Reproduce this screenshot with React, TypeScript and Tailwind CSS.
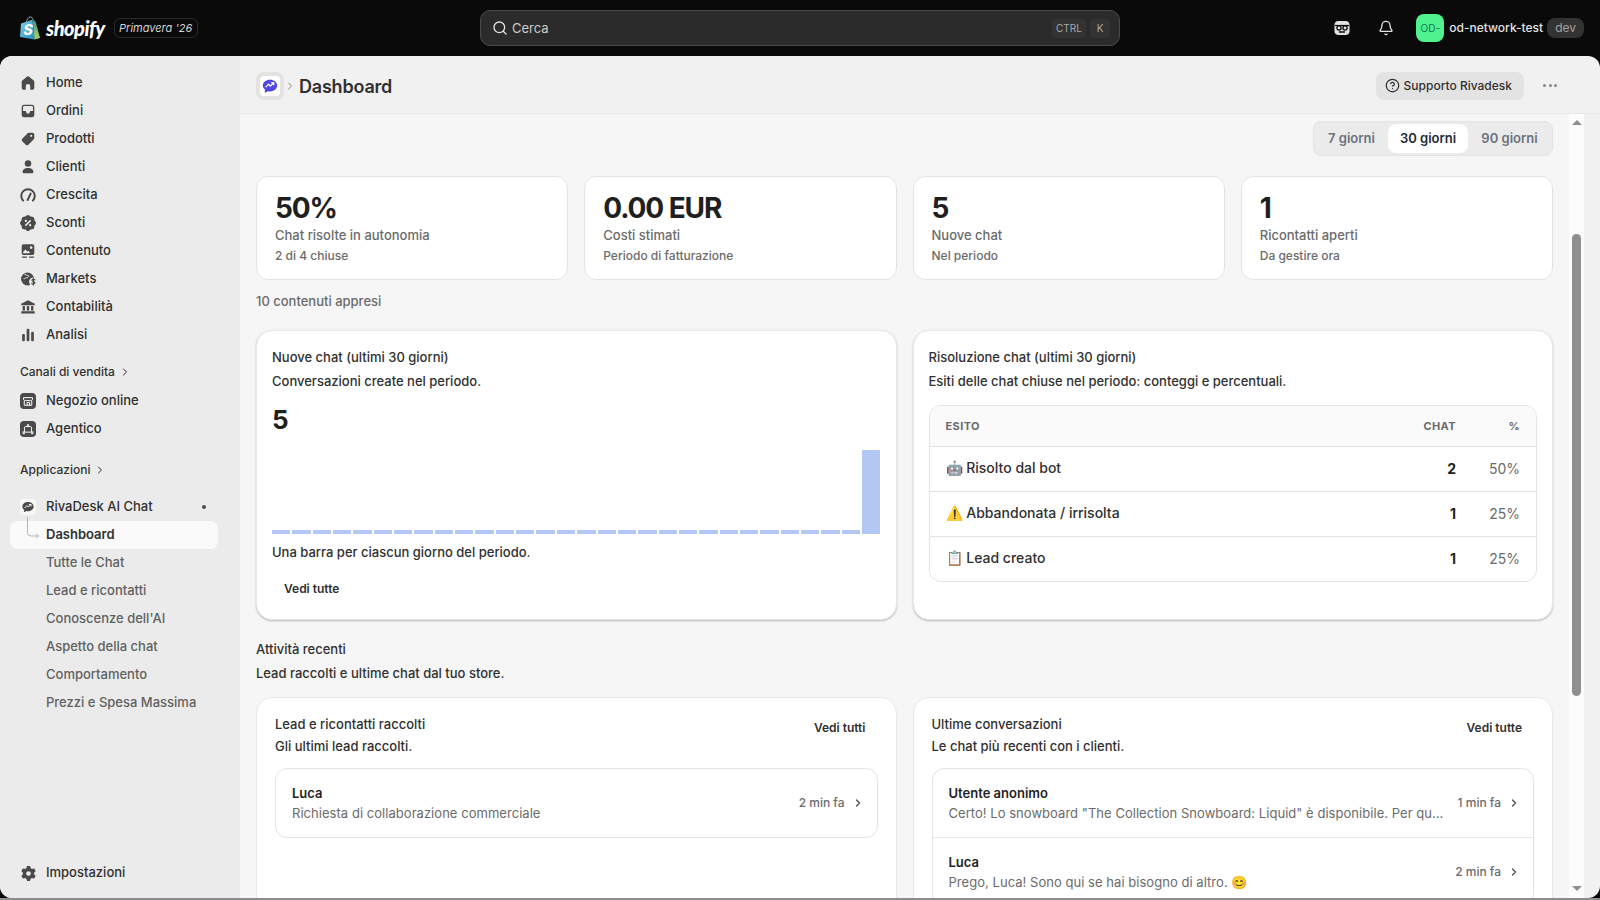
import type { ReactNode } from "react"
import { Bell, ChevronRight, CircleHelp, Search } from "lucide-react"
import { FaGear } from "react-icons/fa6"
import { RiDiscountPercentFill } from "react-icons/ri"

function Icon({ children }: { children: ReactNode }) {
  return (
    <svg viewBox="0 0 20 20" className="w-[18px] h-[18px] shrink-0 text-[#4a4a4a]" fill="currentColor">
      {children}
    </svg>
  )
}

const navItems: { label: string; icon: ReactNode }[] = [
  {
    label: "Home",
    icon: (
      <Icon>
        <path d="M10 2.500a2 2 0 0 0-1.300.5L3.700 7.200A2 2 0 0 0 3 8.700v6.800a2 2 0 0 0 2 2h2.500v-4a2.500 2.500 0 0 1 5 0v4H15a2 2 0 0 0 2-2V8.700a2 2 0 0 0-.7-1.500l-5-4.200a2 2 0 0 0-1.300-.5z" />
      </Icon>
    ),
  },
  {
    label: "Ordini",
    icon: (
      <Icon>
        <path
          fillRule="evenodd"
          d="M5.500 3h9A2.500 2.500 0 0 1 17 5.500v9a2.500 2.500 0 0 1-2.500 2.500h-9A2.500 2.500 0 0 1 3 14.500v-9A2.500 2.500 0 0 1 5.500 3zm0 1.500a1 1 0 0 0-1 1V10H7a1 1 0 0 1 1 1 2 2 0 0 0 4 0 1 1 0 0 1 1-1h2.500V5.500a1 1 0 0 0-1-1z"
        />
      </Icon>
    ),
  },
  {
    label: "Prodotti",
    icon: (
      <Icon>
        <path
          fillRule="evenodd"
          d="M11 3h4a2 2 0 0 1 2 2v4a2 2 0 0 1-.6 1.400l-6 6a2 2 0 0 1-2.800 0l-4-4a2 2 0 0 1 0-2.800l6-6A2 2 0 0 1 11 3zm2.500 2.300a1.200 1.200 0 1 0 0 2.400 1.200 1.200 0 0 0 0-2.400z"
        />
      </Icon>
    ),
  },
  {
    label: "Clienti",
    icon: (
      <Icon>
        <circle cx="10" cy="6" r="3.600" />
        <path d="M4 15.500c0-3 2.700-4.500 6-4.500s6 1.500 6 4.500a1.500 1.500 0 0 1-1.500 1.500h-9A1.500 1.500 0 0 1 4 15.500z" />
      </Icon>
    ),
  },
  {
    label: "Crescita",
    icon: (
      <Icon>
        <path d="M4.600 16.200a7.500 7.500 0 1 1 10.800 0" fill="none" stroke="currentColor" strokeWidth="2.200" strokeLinecap="round" />
        <path d="M9.600 15.500 13 8.500" fill="none" stroke="currentColor" strokeWidth="2.200" strokeLinecap="round" />
      </Icon>
    ),
  },
  {
    label: "Sconti",
    icon: <RiDiscountPercentFill className="w-[18px] h-[18px] shrink-0 text-[#4a4a4a]" />,
  },
  {
    label: "Contenuto",
    icon: (
      <Icon>
        <path
          fillRule="evenodd"
          d="M5 2.500h10A2 2 0 0 1 17 4.500v8a2 2 0 0 1-2 2H5a2 2 0 0 1-2-2v-8a2 2 0 0 1 2-2zm8.500 2.200a1.500 1.500 0 1 0 0 3 1.500 1.500 0 0 0 0-3zM4.600 11l2.400-2.600 2.200 2.200 1.300-1 1.900 2.900H5.200a.6.6 0 0 1-.6-.6z"
        />
        <rect x="3" y="16" width="6" height="1.600" rx=".8" />
        <rect x="11" y="16" width="6" height="1.600" rx=".8" />
      </Icon>
    ),
  },
  {
    label: "Markets",
    icon: (
      <Icon>
        <circle cx="9.500" cy="10" r="7.200" />
        <circle cx="15.800" cy="13" r="4.600" fill="#ebebeb" />
        <path d="M6 4.800c1.500 1 3.500.5 4.500 1.500s-.5 2-2 2.300-2 1.500-3.500 1" fill="none" stroke="#ebebeb" strokeWidth="1" />
        <path d="M17.700 10.900c-.4-.5-1-.7-1.700-.7-1 0-1.700.5-1.700 1.300 0 1.800 3.500 1 3.500 2.800 0 .8-.8 1.300-1.800 1.300-.7 0-1.400-.3-1.800-.8M16 9v8" fill="none" stroke="currentColor" strokeWidth="1.200" strokeLinecap="round" />
      </Icon>
    ),
  },
  {
    label: "Contabilità",
    icon: (
      <Icon>
        <path d="M10 2.500 17.500 6.500V8h-15V6.500z" />
        <rect x="4" y="9" width="2.600" height="5" />
        <rect x="8.700" y="9" width="2.600" height="5" />
        <rect x="13.400" y="9" width="2.600" height="5" />
        <rect x="2.500" y="14.800" width="15" height="2.400" rx=".6" />
      </Icon>
    ),
  },
  {
    label: "Analisi",
    icon: (
      <Icon>
        <rect x="3.500" y="9" width="3" height="8" rx="1.200" />
        <rect x="8.500" y="3" width="3" height="14" rx="1.200" />
        <rect x="13.500" y="6.500" width="3" height="10.500" rx="1.200" />
      </Icon>
    ),
  },
]

const channelItems: { label: string; icon: ReactNode }[] = [
  {
    label: "Negozio online",
    icon: (
      <svg viewBox="0 0 18 18" className="w-4 h-4 mx-[1px] shrink-0">
        <rect width="18" height="18" rx="4.500" fill="#4a4a4a" />
        <path d="M4 5.200h10v2a1.500 1.500 0 0 1-2.500 1 1.700 1.700 0 0 1-2.500 0 1.700 1.700 0 0 1-2.500 0A1.500 1.500 0 0 1 4 7.200z" fill="none" stroke="#fff" strokeWidth="1.100" />
        <path d="M4.800 9v4.800h8.400V9M8 13.800v-3h2.800v3" fill="none" stroke="#fff" strokeWidth="1.100" />
      </svg>
    ),
  },
  {
    label: "Agentico",
    icon: (
      <svg viewBox="0 0 18 18" className="w-4 h-4 mx-[1px] shrink-0">
        <rect width="18" height="18" rx="4.500" fill="#4a4a4a" />
        <path d="M6.200 6.300h5.600a1.200 1.200 0 0 1 1.200 1.200v5H5v-5a1.200 1.200 0 0 1 1.200-1.200zM7.500 6.300 9 3.500l1.500 2.800" fill="none" stroke="#fff" strokeWidth="1.100" strokeLinejoin="round" />
        <path d="M3 11.500h2.500v3.300H3zM12.500 11.500H15v3.300h-2.500z" fill="#ddd" />
      </svg>
    ),
  },
]

const subItems = ["Tutte le Chat", "Lead e ricontatti", "Conoscenze dell'AI", "Aspetto della chat", "Comportamento", "Prezzi e Spesa Massima"]

const stats = [
  { value: "50%", label: "Chat risolte in autonomia", sub: "2 di 4 chiuse" },
  { value: "0.00 EUR", label: "Costi stimati", sub: "Periodo di fatturazione" },
  { value: "5", label: "Nuove chat", sub: "Nel periodo" },
  { value: "1", label: "Ricontatti aperti", sub: "Da gestire ora" },
]

const outcomes = [
  { label: "🤖 Risolto dal bot", count: "2", pct: "50%" },
  { label: "⚠️ Abbandonata / irrisolta", count: "1", pct: "25%" },
  { label: "📋 Lead creato", count: "1", pct: "25%" },
]

const chatBars = Array.from({ length: 30 }, (_, i) => (i === 29 ? 84 : 4))

function ShopifyLogo() {
  return (
    <svg viewBox="0 0 20 24" className="w-[20px] h-[24px] shrink-0">
      <defs>
        <linearGradient id="bagLeft" x1="0" y1="0" x2="1" y2="1">
          <stop offset="0" stopColor="#7fd0e8" />
          <stop offset="1" stopColor="#1f8fc9" />
        </linearGradient>
        <linearGradient id="bagRight" x1="0" y1="0" x2="0" y2="1">
          <stop offset="0" stopColor="#3f8f7f" />
          <stop offset="1" stopColor="#a5d86a" />
        </linearGradient>
      </defs>
      <path d="M6.500 6c.3-2.400 1.800-4.500 3.500-5 1.500-.3 2.700.9 3.200 3.200" fill="none" stroke="#8fa6b8" strokeWidth="1" />
      <path d="M1 7.500 12.500 3.800 14.500 23.500 0 21z" fill="url(#bagLeft)" />
      <path d="M12.500 3.800 15.500 5.200 20 22 14.500 23.500z" fill="url(#bagRight)" />
      <text x="3.500" y="19" fill="#fff" fontSize="14" fontWeight="800" fontStyle="italic" fontFamily="Inter">
        S
      </text>
    </svg>
  )
}

function SidekickIcon() {
  return (
    <svg viewBox="0 0 18 18" className="w-[18px] h-[18px]">
      <path d="M5.500 2h7C15 2 16.500 3.500 16.500 6v6.500c0 2.200-1.800 3.500-4 3.500h-7c-2.200 0-4-1.300-4-3.500V6C1.500 3.500 3 2 5.500 2z" fill="#e3e3e3" />
      <path d="M2 6.500h14" stroke="#0a0a0a" strokeWidth="1.200" />
      <circle cx="6" cy="9" r="2.100" fill="none" stroke="#0a0a0a" strokeWidth="1.300" />
      <circle cx="12" cy="9" r="2.100" fill="none" stroke="#0a0a0a" strokeWidth="1.300" />
      <path d="M6.500 13h5" stroke="#0a0a0a" strokeWidth="1.300" strokeLinecap="round" />
    </svg>
  )
}

function BubbleIcon({ className, fill }: { className: string; fill: string }) {
  return (
    <svg viewBox="0 0 20 20" className={className}>
      <path d="M10 3c4.500 0 8 2.900 8 6.500S14.500 16 10 16c-.8 0-1.500-.1-2.200-.3L4 17.500l.6-3.300C3 13 2 11.400 2 9.500 2 5.900 5.500 3 10 3z" fill={fill} />
      <path d="M5.500 11 8.500 8l2 2 3.500-3.500M11.800 6.300h2.400v2.400" fill="none" stroke="#fff" strokeWidth="1.400" strokeLinecap="round" strokeLinejoin="round" />
    </svg>
  )
}

function NavRow({ label, icon }: { label: string; icon: ReactNode }) {
  return (
    <div className="h-7 flex items-center gap-[9px] px-[9px] text-[13px] font-[450] text-[#303030]">
      {icon}
      <span>{label}</span>
    </div>
  )
}

function Sidebar() {
  return (
    <aside className="w-[240px] shrink-0 bg-[#ebebeb] pt-[13px] pb-[11px] pl-[10px] pr-[22px] flex flex-col">
      {navItems.map((item) => (
        <NavRow key={item.label} label={item.label} icon={item.icon} />
      ))}

      <div className="mt-[9px] mb-[1px] h-7 flex items-center gap-[4px] px-[10px] text-xs font-[450] text-[#303030]">
        Canali di vendita
        <ChevronRight className="w-3 h-3" />
      </div>
      {channelItems.map((item) => (
        <NavRow key={item.label} label={item.label} icon={item.icon} />
      ))}

      <div className="mt-[13px] h-7 flex items-center gap-[4px] px-[10px] text-xs font-[450] text-[#303030]">
        Applicazioni
        <ChevronRight className="w-3 h-3" />
      </div>

      <div className="mt-[9px] h-7 flex items-center gap-[8px] px-[10px] text-[13px] font-[450] text-[#303030]">
        <span className="w-[16px] h-[16px] mr-[2px] rounded bg-[#f7f7f7] flex items-center justify-center shrink-0">
          <BubbleIcon className="w-[14px] h-[14px]" fill="#4a4a4a" />
        </span>
        <span className="flex-1">RivaDesk AI Chat</span>
        <span className="w-1 h-1 rounded-full bg-[#4a4a4a] mr-[2px]" />
      </div>
      <div className="relative h-7 flex items-center pl-[36px] rounded-lg bg-[#fafafa] text-[13px] font-semibold text-[#303030]">
        <svg viewBox="0 0 14 24" className="absolute left-[16px] -top-[4px] w-[14px] h-[24px] text-[#b5b5b5]" fill="none" stroke="currentColor" strokeWidth="1">
          <path d="M1.500 0v15.500a3.500 3.500 0 0 0 3.500 3.500h7.500M10 16.500l2.500 2.500L10 21.500" />
        </svg>
        Dashboard
      </div>
      {subItems.map((label) => (
        <div key={label} className="h-7 flex items-center pl-[36px] text-[13px] font-[450] text-[#616161]">
          {label}
        </div>
      ))}

      <div className="mt-auto">
        <NavRow label="Impostazioni" icon={<span className="w-[18px] flex justify-center shrink-0"><FaGear className="w-[15px] h-[15px] text-[#4a4a4a]" /></span>} />
      </div>
    </aside>
  )
}

function TopBar() {
  return (
    <header className="h-14 shrink-0 flex items-center pl-5 pr-4 relative">
      <div className="flex items-center w-[460px]">
        <ShopifyLogo />
        <span className="ml-[6px] text-white text-[20px] font-black italic tracking-[-0.5px] font-['Lato',sans-serif]">shopify</span>
        <span className="ml-[9px] h-[20px] w-[84px] flex items-center justify-center rounded-md border border-[#2a2a2a] text-[11px] italic text-[#d4d4d4]">Primavera &apos;26</span>
      </div>
      <div className="w-[640px] h-9 flex items-center gap-[4px] pl-[11px] pr-[9px] rounded-[10px] bg-[#2b2b2b] border border-[#4a4a4a]">
        <Search className="w-[16px] h-[16px] text-[#e3e3e3]" />
        <span className="flex-1 pt-[1px] text-[13px] text-[#cccccc]">Cerca</span>
        <span className="h-[19px] w-[34px] flex items-center justify-center rounded bg-[#333333] text-[10px] text-[#a8a8a8]">CTRL</span>
        <span className="h-[19px] w-[20px] flex items-center justify-center rounded bg-[#333333] text-[10px] text-[#a8a8a8]">K</span>
      </div>
      <div className="ml-auto flex items-center">
        <SidekickIcon />
        <Bell className="ml-[27px] w-[16px] h-[16px] text-[#e3e3e3]" />
        <span className="ml-[22px] w-7 h-7 rounded-lg bg-[#4ef28f] flex items-center justify-center text-[10px] text-[#0f7a4f]">OD-</span>
        <span className="ml-[5px] text-xs font-medium text-[#e3e3e3]">od-network-test</span>
        <span className="ml-[4px] h-5 px-2 flex items-center rounded-lg bg-[#333333] text-xs text-[#a3a3a3]">dev</span>
      </div>
    </header>
  )
}

function PageHeader() {
  return (
    <div className="h-[58px] shrink-0 flex items-center pt-[2px] pl-4 pr-[43px] border-b border-[#e8e8e8]">
      <span className="mt-[1px] w-7 h-7 rounded-lg bg-[#e3e3e3] flex items-center justify-center">
        <span className="w-5 h-5 rounded bg-white flex items-center justify-center">
          <BubbleIcon className="w-[18px] h-[18px]" fill="#4f46e5" />
        </span>
      </span>
      <ChevronRight className="w-3 h-3 mt-[1px] text-[#8a8a8a]" />
      <h1 className="ml-[3px] mt-[1px] text-[18px] tracking-[-0.2px] font-semibold text-[#303030]">Dashboard</h1>
      <div className="ml-auto flex items-center">
        <button className="h-7 px-3 pl-[9px] flex items-center gap-[4px] rounded-lg bg-[#e3e3e3] text-xs font-medium text-[#303030]">
          <CircleHelp className="w-[15px] h-[15px]" />
          Supporto Rivadesk
        </button>
        <span className="ml-[19px] flex gap-[2.5px]">
          <span className="w-[3px] h-[3px] rounded-full bg-[#8a8a8a]" />
          <span className="w-[3px] h-[3px] rounded-full bg-[#8a8a8a]" />
          <span className="w-[3px] h-[3px] rounded-full bg-[#8a8a8a]" />
        </span>
      </div>
    </div>
  )
}

function RangeTabs() {
  return (
    <div className="flex justify-end">
      <div className="h-[35px] flex items-center px-[2px] rounded-lg bg-[#ebebeb] border border-[#e3e3e3] text-[13px] font-semibold text-[#6b7280]">
        <span className="w-[72px] pr-[1px] text-center">7 giorni</span>
        <span className="w-[80px] h-[29px] flex items-center justify-center rounded-lg bg-white text-[#1f2937]">30 giorni</span>
        <span className="w-[82px] pl-[1px] text-center">90 giorni</span>
      </div>
    </div>
  )
}

function StatCards() {
  return (
    <div className="grid grid-cols-4 gap-4 mt-[20px]">
      {stats.map((stat) => (
        <div key={stat.label} className="h-[104px] pt-[14px] px-[18px] rounded-xl bg-white border border-[#e3e3e3]">
          <div className="text-[28px] leading-[34px] font-bold tracking-[-0.04em] text-[#1f1f1f]">{stat.value}</div>
          <div className="text-[13px] leading-[20px] font-[450] text-[#6b6b6b]">{stat.label}</div>
          <div className="mt-[1px] text-xs leading-[20px] font-[450] text-[#6b6b6b]">{stat.sub}</div>
        </div>
      ))}
    </div>
  )
}

function ChatChart() {
  return (
    <div className="h-[290px] pt-4 px-[15px] rounded-2xl bg-white border border-[#e8e8e8] shadow-[0_1px_2px_rgba(0,0,0,0.25)]">
      <div className="text-[13px] leading-5 font-[450] text-[#303030]">Nuove chat (ultimi 30 giorni)</div>
      <div className="mt-1 text-[13px] leading-5 font-[450] text-[#303030]">Conversazioni create nel periodo.</div>
      <div className="mt-[12px] text-[26px] leading-[34px] font-bold text-[#1f1f1f]">5</div>
      <div className="mt-[13px] h-[84px] flex items-end gap-[2px]">
        {chatBars.map((height, i) => (
          <div key={i} className="flex-1 bg-[#b4c7f4] rounded-t-[1px]" style={{ height }} />
        ))}
      </div>
      <div className="mt-[8px] text-[13px] leading-5 font-[450] text-[#303030]">Una barra per ciascun giorno del periodo.</div>
      <div className="mt-[17px] ml-3 text-xs leading-5 font-semibold text-[#303030]">Vedi tutte</div>
    </div>
  )
}

function OutcomeTable() {
  return (
    <div className="h-[290px] pt-4 px-[15px] rounded-2xl bg-white border border-[#e8e8e8] shadow-[0_1px_2px_rgba(0,0,0,0.25)]">
      <div className="text-[13px] leading-5 font-[450] text-[#303030]">Risoluzione chat (ultimi 30 giorni)</div>
      <div className="mt-1 text-[13px] leading-5 font-[450] text-[#303030]">Esiti delle chat chiuse nel periodo: conteggi e percentuali.</div>
      <div className="mt-[14px] rounded-xl border border-[#e3e3e3] overflow-hidden">
        <div className="h-[41px] flex items-center px-4 bg-[#fafafa] border-b border-[#e3e3e3] text-[11px] font-bold tracking-[0.4px] text-[#6b6b6b]">
          <span className="flex-1">ESITO</span>
          <span className="w-[60px] text-right">CHAT</span>
          <span className="w-[64px] text-right">%</span>
        </div>
        {outcomes.map((row, i) => (
          <div key={row.label} className={i > 0 ? "h-[45px] flex items-center px-4 border-t border-[#e3e3e3]" : "h-[44px] flex items-center px-4"}>
            <span className="flex-1 pb-[3px] text-sm font-[450] text-[#303030]">{row.label}</span>
            <span className="w-[60px] text-right text-sm font-bold text-[#1f1f1f]">{row.count}</span>
            <span className="w-[64px] text-right text-sm text-[#6b6b6b]">{row.pct}</span>
          </div>
        ))}
      </div>
    </div>
  )
}

function ListRow({ name, text, time, first }: { name: string; text: string; time: string; first?: boolean }) {
  return (
    <div className={first ? "h-[68px] flex items-center pl-4 pr-[13px]" : "h-[68px] flex items-center pl-4 pr-[13px] border-t border-[#e8e8e8]"}>
      <div className="flex-1 min-w-0">
        <div className="text-[13px] leading-5 font-semibold text-[#1f1f1f]">{name}</div>
        <div className="text-[13px] leading-5 tracking-[0.04px] text-[#6b6b6b] truncate">{text}</div>
      </div>
      <span className="ml-2 text-xs font-[450] text-[#6b6b6b] shrink-0">{time}</span>
      <ChevronRight className="ml-[7px] w-[12px] h-[12px] text-[#4a4a4a] shrink-0" strokeWidth={2.5} />
    </div>
  )
}

function ListCard({ title, desc, action, children }: { title: string; desc: string; action: string; children: ReactNode }) {
  return (
    <div className="h-[260px] pt-[16px] px-[18px] rounded-2xl bg-white border border-[#e8e8e8]">
      <div className="flex items-start justify-between">
        <div>
          <div className="text-[13px] leading-5 font-[450] text-[#303030]">{title}</div>
          <div className="mt-[2px] text-[13px] leading-5 font-[450] text-[#303030]">{desc}</div>
        </div>
        <span className="mt-[4px] mr-[12px] text-xs leading-5 font-semibold text-[#303030]">{action}</span>
      </div>
      <div className="mt-[12px] rounded-xl border border-[#e3e3e3] overflow-hidden">{children}</div>
    </div>
  )
}

function ScrollColumn() {
  return (
    <div className="w-[15px] shrink-0 bg-[#fcfcfc] flex flex-col items-center">
      <div className="mt-[6px] w-0 h-0 border-x-[5px] border-x-transparent border-b-[5px] border-b-[#8f8f8f]" />
      <div className="mt-[109px] w-[9px] h-[462px] rounded-full bg-[#8f8f8f]" />
      <div className="mt-auto mb-[7px] w-0 h-0 border-x-[5px] border-x-transparent border-t-[5px] border-t-[#8f8f8f]" />
    </div>
  )
}

export default function App() {
  return (
    <div className="h-[900px] flex flex-col overflow-hidden bg-[#0a0a0a] font-['Inter',sans-serif]">
      <TopBar />
      <div className="h-[842px] shrink-0 flex overflow-hidden rounded-xl bg-[#f1f1f1]">
        <Sidebar />
        <main className="flex-1 min-w-0 flex flex-col">
          <PageHeader />
          <div className="flex-1 min-h-0 flex">
            <div className="flex-1 min-w-0 overflow-hidden bg-[#f6f6f6] px-4 pt-[7px]">
              <RangeTabs />
              <StatCards />
              <div className="mt-[11px] h-[20px] leading-5 text-[13px] font-[450] text-[#6b6b6b]">10 contenuti appresi</div>
              <div className="grid grid-cols-2 gap-4 mt-[19px]">
                <ChatChart />
                <OutcomeTable />
              </div>
              <div className="mt-[19px] text-[13px] leading-5 font-[450] text-[#303030]">Attività recenti</div>
              <div className="mt-1 text-[13px] leading-5 font-[450] text-[#303030]">Lead raccolti e ultime chat dal tuo store.</div>
              <div className="grid grid-cols-2 gap-4 mt-[14px]">
                <ListCard title="Lead e ricontatti raccolti" desc="Gli ultimi lead raccolti." action="Vedi tutti">
                  <ListRow first name="Luca" text="Richiesta di collaborazione commerciale" time="2 min fa" />
                </ListCard>
                <ListCard title="Ultime conversazioni" desc="Le chat più recenti con i clienti." action="Vedi tutte">
                  <ListRow first name="Utente anonimo" text={'Certo! Lo snowboard "The Collection Snowboard: Liquid" è disponibile. Per qu...'} time="1 min fa" />
                  <ListRow name="Luca" text="Prego, Luca! Sono qui se hai bisogno di altro. 😊" time="2 min fa" />
                </ListCard>
              </div>
            </div>
            <ScrollColumn />
            <div className="w-4 shrink-0" />
          </div>
        </main>
      </div>
      <div className="h-[2px] shrink-0 bg-[#8c8c8c]" />
    </div>
  )
}
